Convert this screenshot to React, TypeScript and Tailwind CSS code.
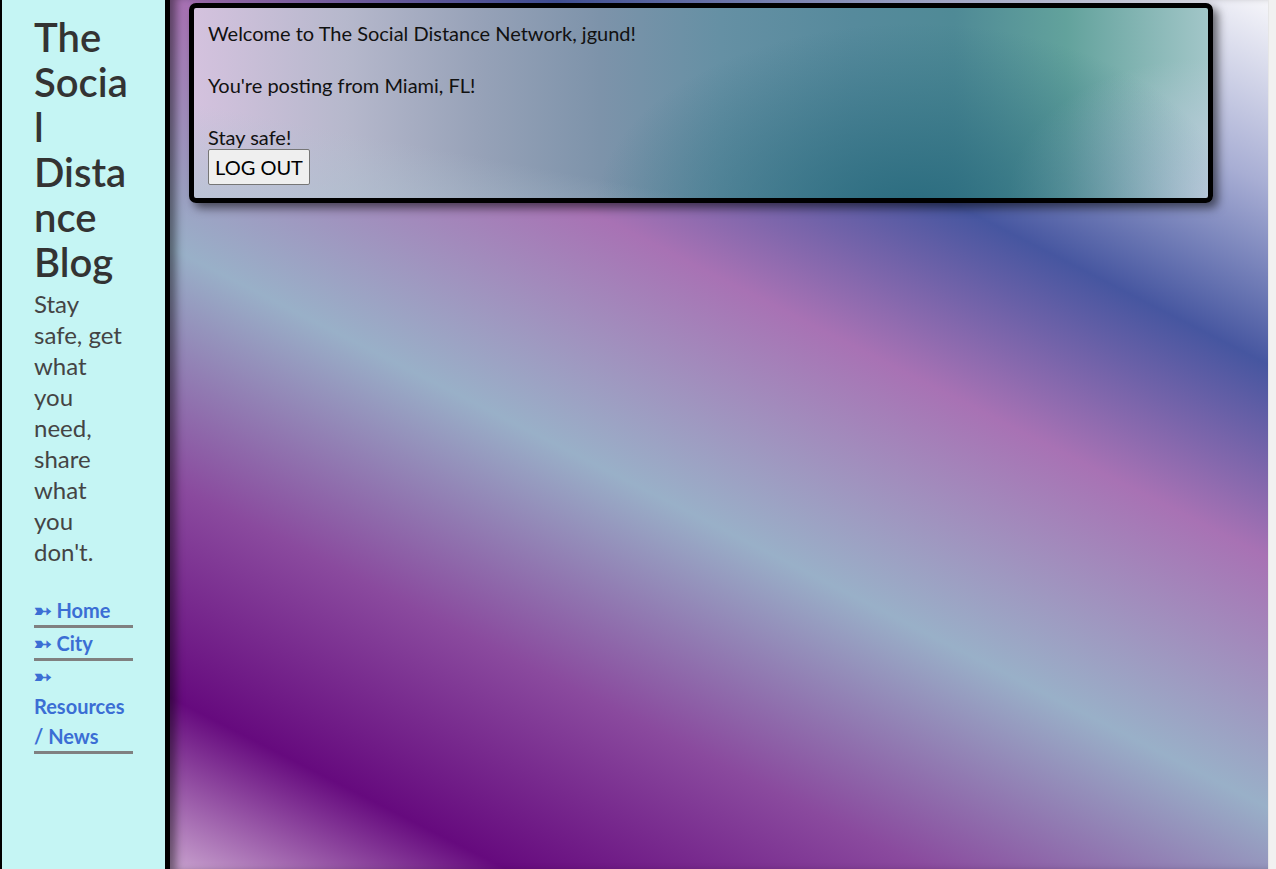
import React from "react";

export default function App() {
  return (
    <div className="flex h-[869px] w-full overflow-hidden font-['Lato','Open_Sans',sans-serif]">
      <aside className="w-[170px] shrink-0 border-l-2 border-r-[5px] border-black bg-[#c5f5f4] px-[32px] pt-[15px]">
        <h1 className="text-[40px] leading-[45px] font-semibold text-[#333]">
          <span className="block whitespace-nowrap">The</span>
          <span className="block whitespace-nowrap">Socia</span>
          <span className="block whitespace-nowrap">l</span>
          <span className="block whitespace-nowrap">Dista</span>
          <span className="block whitespace-nowrap">nce</span>
          <span className="block whitespace-nowrap">Blog</span>
        </h1>
        <p className="mt-[3px] text-[24px] leading-[31px] text-[#444]">
          <span className="block whitespace-nowrap">Stay</span>
          <span className="block whitespace-nowrap">safe, get</span>
          <span className="block whitespace-nowrap">what</span>
          <span className="block whitespace-nowrap">you</span>
          <span className="block whitespace-nowrap">need,</span>
          <span className="block whitespace-nowrap">share</span>
          <span className="block whitespace-nowrap">what</span>
          <span className="block whitespace-nowrap">you</span>
          <span className="block whitespace-nowrap">don't.</span>
        </p>
        <nav className="mt-[28px] text-[20px] leading-[30px] font-bold text-[#3b6ed4]">
          <a className="block h-[33px] border-b-[3px] border-[#808080]" href="#">
            <span className="font-['DejaVu_Sans',sans-serif] text-[21px] leading-none [-webkit-text-stroke:0.7px_#3b6ed4]">➳</span> Home
          </a>
          <a className="block h-[33px] border-b-[3px] border-[#808080]" href="#">
            <span className="font-['DejaVu_Sans',sans-serif] text-[21px] leading-none [-webkit-text-stroke:0.7px_#3b6ed4]">➳</span> City
          </a>
          <a className="block h-[93px] border-b-[3px] border-[#808080]" href="#">
            <span className="font-['DejaVu_Sans',sans-serif] text-[21px] leading-none [-webkit-text-stroke:0.7px_#3b6ed4]">➳</span>
            <br />
            Resources
            <br />/ News
          </a>
        </nav>
      </aside>
      <main className="relative flex-1 bg-[linear-gradient(27deg,#c9a3cf_0%,#660a7e_12%,#8a4a9e_27%,#99b0c8_43.5%,#a872b4_61%,#4656a0_74.5%,#a8aed4_87%,#f6f6fa_100%)] shadow-[inset_10px_0_8px_-4px_rgba(0,0,0,0.45)]">
        <div className="ml-[19px] mt-[3px] w-[1024px] rounded-[7px] border-[5px] border-black px-[14px] pt-[12px] pb-[13px] text-[20px] leading-[26px] text-[#111] shadow-[5px_5px_10px_rgba(0,0,0,0.55)] [background:radial-gradient(ellipse_320px_190px_at_71%_108%,rgba(38,104,124,0.9),rgba(38,104,124,0)),radial-gradient(ellipse_200px_140px_at_100%_100%,rgba(196,206,226,0.85),rgba(196,206,226,0)),linear-gradient(to_top_right,rgba(176,196,210,0.7),rgba(176,196,210,0)_25%),linear-gradient(to_right,#d4c2de_0%,#b6b8cc_15%,#97a2b8_28%,#7d93aa_40%,#6590a4_52%,#568a9c_65%,#4f8a96_75%,#62a29c_86%,#a2c6c8_100%)]">
          <div>Welcome to The Social Distance Network, jgund!</div>
          <br />
          <div>You're posting from Miami, FL!</div>
          <br />
          <div>Stay safe!</div>
          <button className="-mt-px h-[36px] w-[102px] rounded-[2px] border border-[#767676] bg-[#efefef] text-[20px] leading-[26px] text-black">
            LOG OUT
          </button>
        </div>
      </main>
      <div className="w-[8px] shrink-0 border-l border-[#e6e6e6] bg-[#f1f1f1]" />
    </div>
  );
}
